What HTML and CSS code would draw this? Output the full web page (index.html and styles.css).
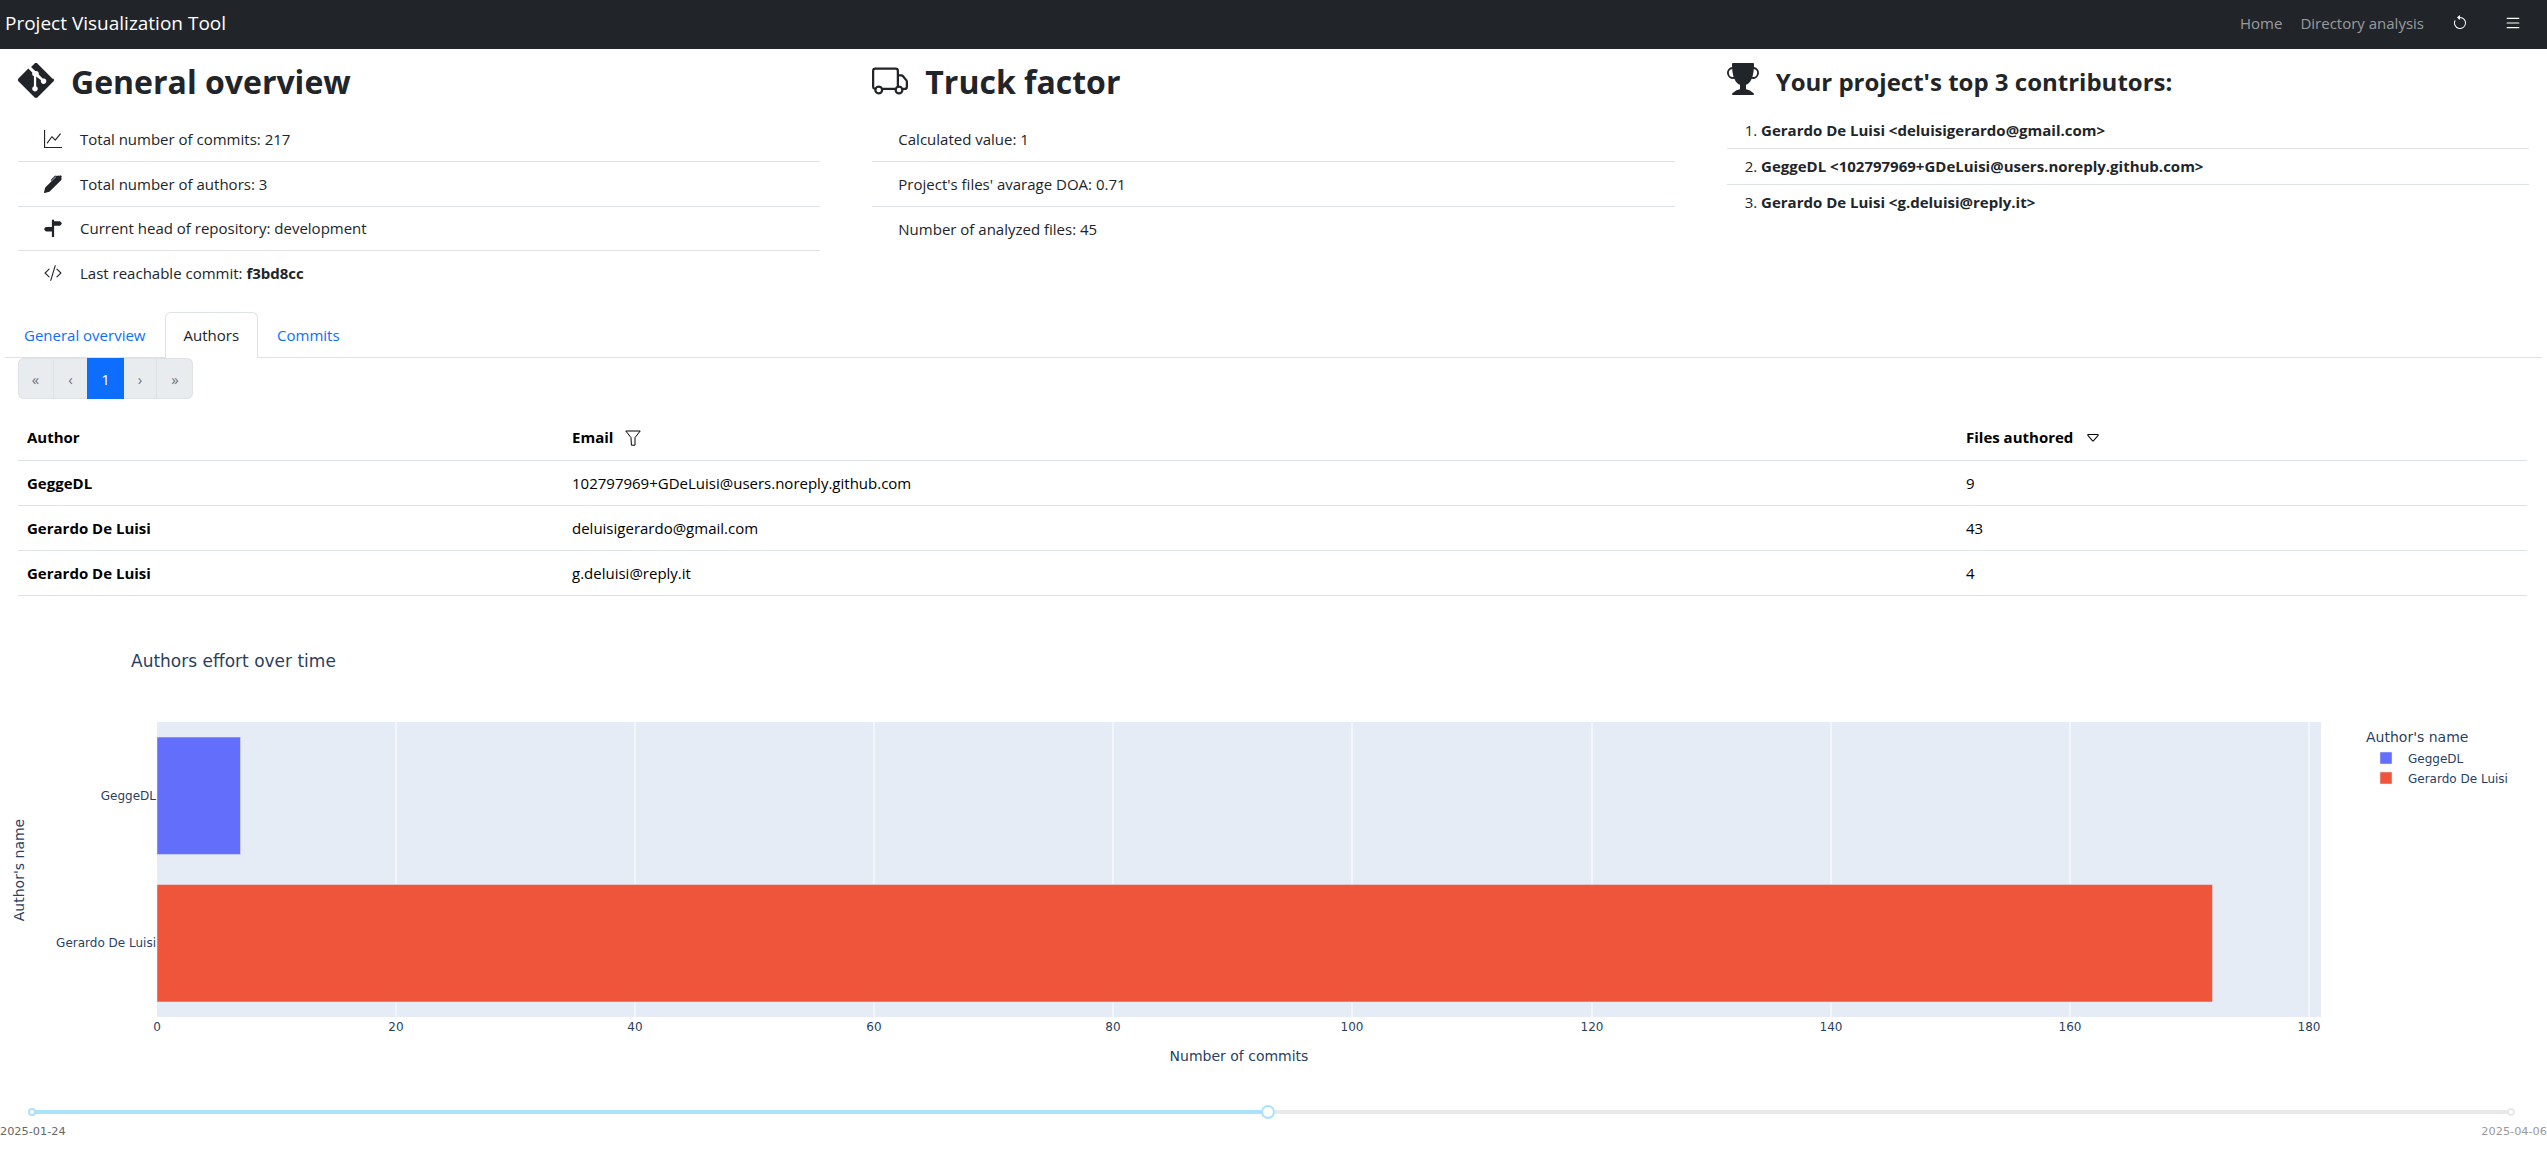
FILE: index.html
```html
<!DOCTYPE html>
<html lang="en">
<head>
<meta charset="utf-8">
<title>Project Visualization Tool</title>
<link rel="stylesheet" href="styles.css">
</head>
<body>

<nav class="navbar">
	<span class="brand">Project Visualization Tool</span>
	<div class="nav-right">
		<a class="nav-link">Home</a>
		<a class="nav-link">Directory analysis</a>
		<svg class="nav-reload" viewBox="0 0 16 16"><path d="M8 3a5 5 0 1 1-4.546 2.914.5.5 0 0 0-.908-.417A6 6 0 1 0 8 2v1z"/><path d="M8 4.466V.534a.25.25 0 0 0-.41-.192L5.23 2.308a.25.25 0 0 0 0 .384l2.36 1.966A.25.25 0 0 0 8 4.466z"/></svg>
		<svg class="nav-menu" viewBox="2 2 12 12"><path d="M2.5 12a.5.5 0 0 1 .5-.5h10a.5.5 0 0 1 0 1H3a.5.5 0 0 1-.5-.5zm0-4a.5.5 0 0 1 .5-.5h10a.5.5 0 0 1 0 1H3a.5.5 0 0 1-.5-.5zm0-4a.5.5 0 0 1 .5-.5h10a.5.5 0 0 1 0 1H3a.5.5 0 0 1-.5-.5z"/></svg>
	</div>
</nav>

<section class="summary">
	<div class="summary-col">
		<h2 class="summary-title">
			<svg class="title-icon" viewBox="0 0 16 16"><path d="M15.698 7.287 8.712.302a1.03 1.03 0 0 0-1.457 0l-1.45 1.45 1.84 1.84a1.223 1.223 0 0 1 1.55 1.56l1.773 1.774a1.224 1.224 0 1 1-.733.693L8.08 5.966v4.353a1.224 1.224 0 1 1-1.008-.036V5.887a1.226 1.226 0 0 1-.664-1.608L4.596 2.465.302 6.759a1.03 1.03 0 0 0 0 1.457l6.986 6.986a1.03 1.03 0 0 0 1.457 0l6.953-6.953a1.03 1.03 0 0 0 0-1.457"/></svg>
			General overview
		</h2>
		<ul class="info-list">
			<li>
				<svg class="row-icon" viewBox="0 0 16 16"><path d="M0 0h1v15h15v1H0V0Zm14.817 3.113a.5.5 0 0 1 .07.704l-4.5 5.5a.5.5 0 0 1-.74.037L7.06 6.767l-3.656 5.027a.5.5 0 0 1-.808-.588l4-5.5a.5.5 0 0 1 .758-.06l2.609 2.61 4.15-5.073a.5.5 0 0 1 .704-.07Z"/></svg>
				<span>Total number of commits: 217</span>
			</li>
			<li>
				<svg class="row-icon" viewBox="0 0 16 16"><path d="m13.498.795.149-.149a1.207 1.207 0 1 1 1.707 1.708l-.149.148a1.5 1.5 0 0 1-.059 2.059L4.854 14.854a.5.5 0 0 1-.233.131l-4 1a.5.5 0 0 1-.606-.606l1-4a.5.5 0 0 1 .131-.232l9.642-9.642a.5.5 0 0 0-.642.056L6.854 4.854a.5.5 0 1 1-.708-.708L9.44.854A1.5 1.5 0 0 1 11.5.796a1.5 1.5 0 0 1 1.998-.001z"/></svg>
				<span>Total number of authors: 3</span>
			</li>
			<li>
				<svg class="row-icon" viewBox="0 0 16 16"><path d="M7 16h2V6h5a1 1 0 0 0 .8-.4l.975-1.3a.5.5 0 0 0 0-.6L14.8 2.4A1 1 0 0 0 14 2H9v-.586a1 1 0 0 0-2 0V7H2a1 1 0 0 0-.8.4L.225 8.7a.5.5 0 0 0 0 .6l.975 1.3a1 1 0 0 0 .8.4h5v5z"/></svg>
				<span>Current head of repository: development</span>
			</li>
			<li>
				<svg class="row-icon" viewBox="0 0 16 16"><path d="M10.478 1.647a.5.5 0 1 0-.956-.294l-4 13a.5.5 0 0 0 .956.294l4-13zM4.854 4.146a.5.5 0 0 1 0 .708L1.707 8l3.147 3.146a.5.5 0 0 1-.708.708l-3.5-3.5a.5.5 0 0 1 0-.708l3.5-3.5a.5.5 0 0 1 .708 0zm6.292 0a.5.5 0 0 0 0 .708L14.293 8l-3.147 3.146a.5.5 0 0 0 .708.708l3.5-3.5a.5.5 0 0 0 0-.708l-3.5-3.5a.5.5 0 0 0-.708 0z"/></svg>
				<span>Last reachable commit: <b>f3bd8cc</b></span>
			</li>
		</ul>
	</div>

	<div class="summary-col">
		<h2 class="summary-title">
			<svg class="title-icon" viewBox="0 0 16 16"><path d="M0 3.5A1.5 1.5 0 0 1 1.5 2h9A1.5 1.5 0 0 1 12 3.5V5h1.02a1.5 1.5 0 0 1 1.17.563l1.481 1.85a1.5 1.5 0 0 1 .329.938V10.5a1.5 1.5 0 0 1-1.5 1.5H14a2 2 0 1 1-4 0H5a2 2 0 1 1-3.998-.085A1.5 1.5 0 0 1 0 10.5v-7zm1.294 7.456A1.999 1.999 0 0 1 4.732 11h5.536a2.01 2.01 0 0 1 .732-.732V3.5a.5.5 0 0 0-.5-.5h-9a.5.5 0 0 0-.5.5v7a.5.5 0 0 0 .294.456zM12 10a2 2 0 0 1 1.732 1h.768a.5.5 0 0 0 .5-.5V8.35a.5.5 0 0 0-.11-.312l-1.48-1.85A.5.5 0 0 0 13.02 6H12v4zm-9 1a1 1 0 1 0 0 2 1 1 0 0 0 0-2zm9 0a1 1 0 1 0 0 2 1 1 0 0 0 0-2z"/></svg>
			Truck factor
		</h2>
		<ul class="info-list">
			<li><span>Calculated value: 1</span></li>
			<li><span>Project's files' avarage DOA: 0.71</span></li>
			<li><span>Number of analyzed files: 45</span></li>
		</ul>
	</div>

	<div class="summary-col">
		<h4 class="summary-title top-title">
			<svg class="trophy-icon" viewBox="0 0 16 16"><path d="M2.5.5A.5.5 0 0 1 3 0h10a.5.5 0 0 1 .5.5c0 .538-.012 1.05-.034 1.536a3 3 0 1 1-1.133 5.89c-.79 1.865-1.878 2.777-2.833 3.011v2.173l1.425.356c.194.048.377.135.537.255L13.3 15.1a.5.5 0 0 1-.3.9H3a.5.5 0 0 1-.3-.9l1.838-1.379c.16-.12.343-.207.537-.255L6.5 13.11v-2.173c-.955-.234-2.043-1.146-2.833-3.012a3 3 0 1 1-1.132-5.89A33.076 33.076 0 0 1 2.5.5zm.099 2.54a2 2 0 0 0 .72 3.935c-.333-1.05-.588-2.346-.72-3.935zm10.083 3.935a2 2 0 0 0 .72-3.935c-.133 1.59-.388 2.885-.72 3.935z"/></svg>
			Your project's top 3 contributors:
		</h4>
		<ol class="top-list">
			<li><b>Gerardo De Luisi &lt;deluisigerardo@gmail.com&gt;</b></li>
			<li><b>GeggeDL &lt;102797969+GDeLuisi@users.noreply.github.com&gt;</b></li>
			<li><b>Gerardo De Luisi &lt;g.deluisi@reply.it&gt;</b></li>
		</ol>
	</div>
</section>

<ul class="tabs">
	<li class="tab">General overview</li>
	<li class="tab tab-active">Authors</li>
	<li class="tab">Commits</li>
</ul>

<div class="pagination">
	<span class="page-item page-first">«</span>
	<span class="page-item page-prev">‹</span>
	<span class="page-item page-current">1</span>
	<span class="page-item page-next">›</span>
	<span class="page-item page-last">»</span>
</div>

<table class="authors">
	<thead>
		<tr>
			<th class="col-author">Author</th>
			<th class="col-email">Email <svg class="funnel" viewBox="0 0 16 16"><path d="M.8 1h14.4L10 7.6v7.6H6.4L6 7.6z"/></svg></th>
			<th class="col-files">Files authored <svg class="caret" viewBox="0 0 16 16"><path d="M3.204 5h9.592L8 10.481 3.204 5zm-.753.659 4.796 5.48a1 1 0 0 0 1.506 0l4.796-5.48c.566-.647.106-1.659-.753-1.659H3.204a1 1 0 0 0-.753 1.659z"/></svg></th>
		</tr>
	</thead>
	<tbody>
		<tr><td><b>GeggeDL</b></td><td>102797969+GDeLuisi@users.noreply.github.com</td><td>9</td></tr>
		<tr><td><b>Gerardo De Luisi</b></td><td>deluisigerardo@gmail.com</td><td>43</td></tr>
		<tr><td><b>Gerardo De Luisi</b></td><td>g.deluisi@reply.it</td><td>4</td></tr>
	</tbody>
</table>

<svg class="chart" viewBox="0 620 2547 465">
	<text class="chart-title" x="131" y="666">Authors effort over time</text>

	<rect class="plot-bg" x="157" y="721" width="2164" height="295"/>
	<g class="grid">
		<line x1="396" y1="721" x2="396" y2="1016"/>
		<line x1="635" y1="721" x2="635" y2="1016"/>
		<line x1="874" y1="721" x2="874" y2="1016"/>
		<line x1="1113" y1="721" x2="1113" y2="1016"/>
		<line x1="1352" y1="721" x2="1352" y2="1016"/>
		<line x1="1592" y1="721" x2="1592" y2="1016"/>
		<line x1="1831" y1="721" x2="1831" y2="1016"/>
		<line x1="2070" y1="721" x2="2070" y2="1016"/>
		<line x1="2309" y1="721" x2="2309" y2="1016"/>
	</g>
	<rect class="bar bar-blue" x="157" y="736" width="83.5" height="117.5"/>
	<rect class="bar bar-red" x="157" y="883.5" width="2055.5" height="117.5"/>

	<g class="tick tick-y">
		<text x="156" y="799">GeggeDL</text>
		<text x="156" y="946">Gerardo De Luisi</text>
	</g>
	<g class="tick tick-x">
		<text x="157" y="1030">0</text>
		<text x="396" y="1030">20</text>
		<text x="635" y="1030">40</text>
		<text x="874" y="1030">60</text>
		<text x="1113" y="1030">80</text>
		<text x="1352" y="1030">100</text>
		<text x="1592" y="1030">120</text>
		<text x="1831" y="1030">140</text>
		<text x="2070" y="1030">160</text>
		<text x="2309" y="1030">180</text>
	</g>
	<text class="axis-title" x="1239" y="1060">Number of commits</text>
	<text class="axis-title" transform="translate(24 869) rotate(-90)">Author's name</text>

	<text class="legend-title" x="2366" y="741">Author's name</text>
	<rect class="bar bar-blue" x="2380" y="751" width="12" height="12"/>
	<text class="legend-item" x="2408" y="762">GeggeDL</text>
	<rect class="bar bar-red" x="2380" y="771" width="12" height="12"/>
	<text class="legend-item" x="2408" y="782">Gerardo De Luisi</text>
</svg>

<div class="slider">
	<div class="rail">
		<div class="rail-fill" style="width:49.86%"></div>
		<span class="dot dot-start"></span>
		<span class="dot dot-end"></span>
		<span class="handle" style="left:49.86%"></span>
	</div>
	<div class="marks">
		<span class="mark mark-active">2025-01-24</span>
		<span class="mark">2025-04-06</span>
	</div>
</div>

</body>
</html>
```

FILE: styles.css
```css
html, body {
	margin: 0;
	padding: 0;
	overflow: hidden;
}

body {
	background: #fff;
	color: #212529;
	font-family: "Open Sans", sans-serif;
	font-size: 15px;
}

/* navbar */
.navbar {
	display: flex;
	justify-content: space-between;
	align-items: center;
	height: 49px;
	padding: 0 27px 4px 5px;
	box-sizing: border-box;
	background: #212529;
}
.brand {
	color: #fff;
	font-size: 19px;
}
.nav-right {
	display: flex;
	align-items: center;
	gap: 18px;
}
.nav-link {
	color: rgba(255,255,255,.55);
	font-size: 15px;
}
.nav-reload {
	width: 16px;
	height: 16px;
	margin-left: 10px;
	fill: #fff;
}
.nav-menu {
	width: 14px;
	height: 14px;
	margin-left: 20px;
	fill: #fff;
}

/* top three columns */
.summary {
	display: grid;
	grid-template-columns: repeat(3, 1fr);
	column-gap: 52px;
	padding: 0 18px;
	height: 263px;
}
.summary-title {
	display: flex;
	align-items: center;
	gap: 17px;
	height: 64px;
	margin: 0 0 4.5px;
	font-size: 32px;
	font-weight: 700;
}
.top-title {
	margin-bottom: 0;
	font-size: 24px;
}
.title-icon {
	width: 36px;
	height: 36px;
	fill: #212529;
}
.trophy-icon {
	width: 32px;
	height: 32px;
	margin-top: -4px;
	fill: #212529;
}
.info-list {
	list-style: none;
	margin: 0;
	padding: 0;
}
.info-list li {
	display: flex;
	align-items: center;
	gap: 18px;
	height: 44.5px;
	padding-left: 26px;
	box-sizing: border-box;
	border-bottom: 1px solid #dee2e6;
}
.info-list li:last-child {
	border-bottom: none;
}
.row-icon {
	width: 18px;
	height: 18px;
	fill: #212529;
}
.top-list {
	list-style-position: inside;
	margin: 0;
	padding: 0;
}
.top-list li {
	height: 36px;
	padding-left: 18px;
	line-height: 35px;
	box-sizing: border-box;
	border-bottom: 1px solid #dee2e6;
}
.top-list li:last-child {
	border-bottom: none;
}

/* tabs */
.tabs {
	display: flex;
	list-style: none;
	height: 46px;
	margin: 0 5px;
	padding: 0;
	box-sizing: border-box;
	border-bottom: 1px solid #dee2e6;
}
.tab {
	height: 46px;
	padding: 0 18px;
	box-sizing: border-box;
	line-height: 45px;
	color: #0d6efd;
	border: 1px solid transparent;
	border-bottom: none;
}
.tab-active {
	color: #212529;
	background: #fff;
	border-color: #dee2e6;
	border-radius: 6px 6px 0 0;
}

/* pagination */
.pagination {
	display: flex;
	width: 175px;
	height: 41px;
	margin: 0 0 16px 18px;
	border-radius: 6px;
	overflow: hidden;
	background: #e9ecef;
	color: #6c757d;
	box-shadow: inset 0 0 0 1px #dee2e6;
}
.page-item {
	display: flex;
	align-items: center;
	justify-content: center;
	box-sizing: border-box;
	border-right: 1px solid #dee2e6;
}
.page-first { width: 36px; }
.page-prev { width: 33px; border-right: none; }
.page-current { width: 37px; background: #0d6efd; color: #fff; border-right: none; }
.page-next { width: 33px; }
.page-last { width: 36px; border-right: none; }

/* authors table */
.authors {
	width: 2509px;
	margin-left: 18px;
	border-collapse: collapse;
	table-layout: fixed;
	color: #000;
}
.authors th, .authors td {
	height: 45px;
	padding: 0 9px;
	box-sizing: border-box;
	text-align: left;
	border-bottom: 1px solid #dee2e6;
}
.col-author { width: 545px; }
.col-email { width: 1394px; }
.funnel {
	width: 16px;
	height: 16px;
	margin-left: 8px;
	vertical-align: -3px;
	fill: none;
	stroke: #000;
	stroke-width: 1;
}
.caret {
	width: 16px;
	height: 16px;
	margin-left: 8px;
	vertical-align: -3px;
	fill: #000;
}

/* plotly style chart */
.chart {
	display: block;
	width: 2547px;
	height: 465px;
	margin-top: 25px;
	font-family: "DejaVu Sans", sans-serif;
}
.chart text {
	fill: #2a3f5f;
}
.chart-title {
	font-size: 17px;
}
.plot-bg {
	fill: #e5ecf6;
}
.grid line {
	stroke: #fff;
	stroke-width: 1;
}
.bar {
	stroke: #e5ecf6;
	stroke-width: .5;
}
.bar-blue { fill: #636efa; }
.bar-red { fill: #ef553b; }
.tick {
	font-size: 12px;
}
.tick-y { text-anchor: end; }
.tick-x { text-anchor: middle; }
.axis-title {
	font-size: 14px;
	text-anchor: middle;
}
.legend-title {
	font-size: 14px;
}
.legend-item {
	font-size: 12px;
}

/* date slider */
.slider {
	margin-top: 24px;
}
.rail {
	position: relative;
	height: 4px;
	margin: 0 36px 0 32px;
	background: #e9e9e9;
}
.rail-fill {
	height: 4px;
	background: #abe2fb;
}
.dot, .handle {
	position: absolute;
	box-sizing: border-box;
	background: #fff;
	border-radius: 50%;
}
.dot {
	top: -2px;
	width: 8px;
	height: 8px;
	margin-left: -4px;
	border: 2px solid #e9e9e9;
}
.dot-start {
	left: 0;
	border-color: #abe2fb;
}
.dot-end {
	left: 100%;
}
.handle {
	top: -5px;
	width: 14px;
	height: 14px;
	margin-left: -7px;
	border: 2px solid #abe2fb;
}
.marks {
	display: flex;
	justify-content: space-between;
	margin-top: 11px;
	font-family: "DejaVu Sans", sans-serif;
	font-size: 11.3px;
	color: #999;
}
.mark-active {
	color: #666;
}
```
